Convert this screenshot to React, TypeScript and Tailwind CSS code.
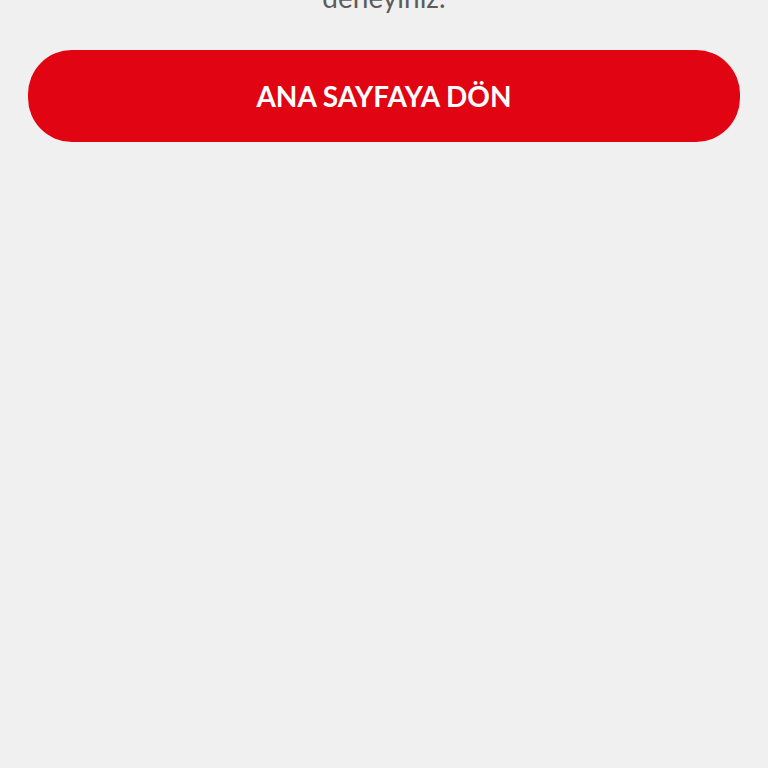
export default function App() {
  return (
    <div className="flex min-h-screen flex-col bg-[#f0f0f0] px-7 font-['Lato',sans-serif]">
      {/* message tail, scrolled mostly out of view */}
      <p className="-mt-[20px] text-center text-[28px] leading-[34px] text-[#5c5c5c]">
        deneyiniz.
      </p>
      <button
        type="button"
        className="mt-[36px] flex h-[92px] w-full items-center justify-center rounded-[44px] bg-[#e10412] text-[28px] font-bold text-white"
      >
        ANA SAYFAYA DÖN
      </button>
    </div>
  );
}
